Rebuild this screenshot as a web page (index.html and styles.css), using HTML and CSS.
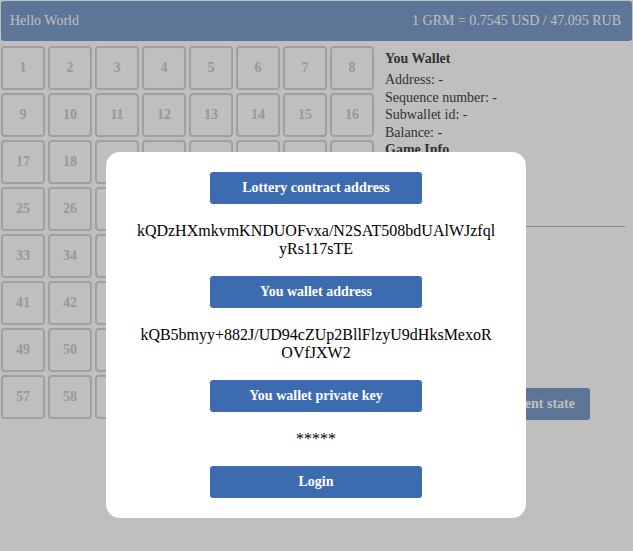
FILE: index.html
```html
<!DOCTYPE html>
<html>
<head>
<meta charset="utf-8">
<title>Lottery</title>
<link rel="stylesheet" href="styles.css">
</head>
<body>
<div class="app">
  <header class="topbar">
    <span class="brand">Hello World</span>
    <span class="rate">1 GRM = 0.7545 USD / 47.095 RUB</span>
  </header>
  <main class="main">
    <div class="grid">
      <div class="cell">1</div><div class="cell">2</div><div class="cell">3</div><div class="cell">4</div><div class="cell">5</div><div class="cell">6</div><div class="cell">7</div><div class="cell">8</div>
      <div class="cell">9</div><div class="cell">10</div><div class="cell">11</div><div class="cell">12</div><div class="cell">13</div><div class="cell">14</div><div class="cell">15</div><div class="cell">16</div>
      <div class="cell">17</div><div class="cell">18</div><div class="cell">19</div><div class="cell">20</div><div class="cell">21</div><div class="cell">22</div><div class="cell">23</div><div class="cell">24</div>
      <div class="cell">25</div><div class="cell">26</div><div class="cell">27</div><div class="cell">28</div><div class="cell">29</div><div class="cell">30</div><div class="cell">31</div><div class="cell">32</div>
      <div class="cell">33</div><div class="cell">34</div><div class="cell">35</div><div class="cell">36</div><div class="cell">37</div><div class="cell">38</div><div class="cell">39</div><div class="cell">40</div>
      <div class="cell">41</div><div class="cell">42</div><div class="cell">43</div><div class="cell">44</div><div class="cell">45</div><div class="cell">46</div><div class="cell">47</div><div class="cell">48</div>
      <div class="cell">49</div><div class="cell">50</div><div class="cell">51</div><div class="cell">52</div><div class="cell">53</div><div class="cell">54</div><div class="cell">55</div><div class="cell">56</div>
      <div class="cell">57</div><div class="cell">58</div><div class="cell">59</div><div class="cell">60</div><div class="cell">61</div><div class="cell">62</div><div class="cell">63</div><div class="cell">64</div>
    </div>
    <aside class="panel">
      <div class="panel-title">You Wallet</div>
      <div class="line">Address: -</div>
      <div class="line">Sequence number: -</div>
      <div class="line">Subwallet id: -</div>
      <div class="line">Balance: -</div>
      <div class="panel-title">Game Info</div>
      <div class="line">Round: -</div>
      <div class="line">Bank: -</div>
      <div class="line">Tickets: -</div>
      <hr class="divider">
      <div class="actions">
        <button class="state-btn">Get current state</button>
      </div>
    </aside>
  </main>
</div>

<div class="overlay">
  <div class="modal">
    <button class="modal-btn">Lottery contract address</button>
    <div class="modal-text">kQDzHXmkvmKNDUOFvxa/N2SAT508bdUAlWJzfqlyRs117sTE</div>
    <button class="modal-btn">You wallet address</button>
    <div class="modal-text">kQB5bmyy+882J/UD94cZUp2BllFlzyU9dHksMexoROVfJXW2</div>
    <button class="modal-btn">You wallet private key</button>
    <div class="modal-text">*****</div>
    <button class="modal-btn">Login</button>
  </div>
</div>
</body>
</html>
```

FILE: styles.css
```css
html, body {
  margin: 0;
  padding: 0;
  background: #ffffff;
  font-family: "Liberation Serif", "Times New Roman", serif;
  font-size: 14px;
}

.app {
  padding: 1px;
}

.topbar {
  height: 40px;
  background: #7c9cc8;
  border-radius: 3px;
  color: #ffffff;
  display: flex;
  align-items: center;
  justify-content: space-between;
  padding: 0 11px 0 9px;
  font-size: 14px;
}

.main {
  display: flex;
  margin-top: 5px;
}

.grid {
  display: grid;
  grid-template-columns: repeat(8, 44px);
  grid-auto-rows: 44px;
  gap: 3px;
}

.cell {
  box-sizing: border-box;
  border: 2px solid #d6d6d6;
  border-radius: 4px;
  display: flex;
  align-items: center;
  justify-content: center;
  font-weight: bold;
  font-size: 14px;
  color: #cccccc;
}

.panel {
  flex: 1;
  margin-left: 11px;
  margin-right: 7px;
  padding-top: 4px;
  display: flex;
  flex-direction: column;
  color: #444444;
}

.panel-title {
  font-weight: bold;
  line-height: 18px;
  margin-bottom: 3px;
}

.line {
  line-height: 17.5px;
}

.divider {
  border: none;
  border-top: 1px solid #b3b3b3;
  margin: 11px 0 0 0;
  height: 0;
}

.actions {
  display: flex;
  justify-content: flex-end;
  margin-top: 161px;
  padding-right: 35px;
}

.state-btn {
  font-family: "Liberation Serif", "Times New Roman", serif;
  font-weight: bold;
  font-size: 14px;
  color: #ffffff;
  background: #7c9cc8;
  border: none;
  border-radius: 3px;
  height: 32px;
  padding: 0 15px;
}

.overlay {
  position: fixed;
  inset: 0;
  background: rgba(0, 0, 0, 0.25);
  padding: 152px 1px 0 0;
}

.modal {
  width: 420px;
  box-sizing: border-box;
  margin: 0 auto;
  background: #ffffff;
  border-radius: 14px;
  padding: 20px 30px;
  display: flex;
  flex-direction: column;
  align-items: center;
  gap: 18px;
}

.modal-btn {
  width: 212px;
  height: 32px;
  border: none;
  border-radius: 3px;
  background: #3c6caf;
  color: #ffffff;
  font-family: "Liberation Serif", "Times New Roman", serif;
  font-weight: bold;
  font-size: 14px;
}

.modal-text {
  width: 100%;
  font-size: 16px;
  line-height: 18px;
  color: #000000;
  text-align: center;
  word-break: break-all;
}
```
